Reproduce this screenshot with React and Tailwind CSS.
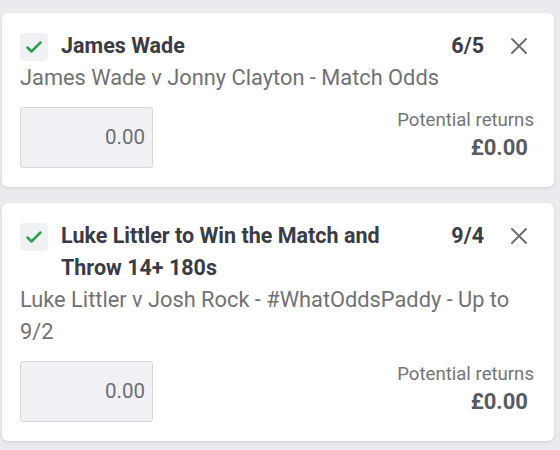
import React from 'react';

const bets = [
  {
    title: 'James Wade',
    odds: '6/5',
    market: 'James Wade v Jonny Clayton - Match Odds',
  },
  {
    title: 'Luke Littler to Win the Match and Throw 14+ 180s',
    odds: '9/4',
    market: 'Luke Littler v Josh Rock - #WhatOddsPaddy - Up to 9/2',
  },
];

const Check = () => (
  <svg width="18" height="18" viewBox="0 0 18 18" fill="none">
    <path d="M2.5 9.5l4 4 9-9" stroke="#2f9e4b" strokeWidth="2.5" strokeLinecap="round" strokeLinejoin="round" />
  </svg>
);

const Close = () => (
  <svg width="18" height="18" viewBox="0 0 18 18" fill="none">
    <path d="M2 2l14 14M16 2L2 16" stroke="#6e6e72" strokeWidth="2" strokeLinecap="round" />
  </svg>
);

const BetCard = ({ bet }) => (
  <div className="bg-white rounded-md shadow-[0_1px_3px_rgba(0,0,0,0.12)] pt-5 pb-[19px] pl-[18px] pr-[26px]">
    <div className="flex items-start">
      <div className="w-7 h-7 shrink-0 rounded bg-[#f0f1f5] flex items-center justify-center">
        <Check />
      </div>
      <div className="flex-1 ml-[13px] text-[21.5px] leading-[32px] font-bold text-[#3b3b45] -mt-[3px] pr-4">
        {bet.title}
      </div>
      <div className="text-[21.5px] leading-[32px] font-bold text-[#3b3b45] -mt-[3px]">{bet.odds}</div>
      <div className="ml-[26px] mt-[4px]">
        <Close />
      </div>
    </div>
    <div className="text-[21.8px] leading-[32px] text-[#717175] pr-4">{bet.market}</div>
    <div className="flex items-start justify-between mt-[13px]">
      <div className="w-[133px] h-[61px] rounded-[3px] border border-[#d6d6da] bg-[#f0f1f5] flex items-center justify-end pr-[7px] text-[20.5px] text-[#6e6e72]">
        0.00
      </div>
      <div className="flex flex-col items-end -mr-[6px]">
        <div className="text-[18.6px] leading-[26px] text-[#747478]">Potential returns</div>
        <div className="text-[22px] leading-[30px] font-bold text-[#5a5a60] mr-[6px]">£0.00</div>
      </div>
    </div>
  </div>
);

export default function App() {
  return (
    <div className="w-[560px] h-[450px] overflow-hidden bg-[#ebebef] pl-[2px] pt-[13px] pr-[6px] flex flex-col gap-4 font-['Roboto',sans-serif]">
      {bets.map((bet, i) => (
        <BetCard key={i} bet={bet} />
      ))}
    </div>
  );
}
